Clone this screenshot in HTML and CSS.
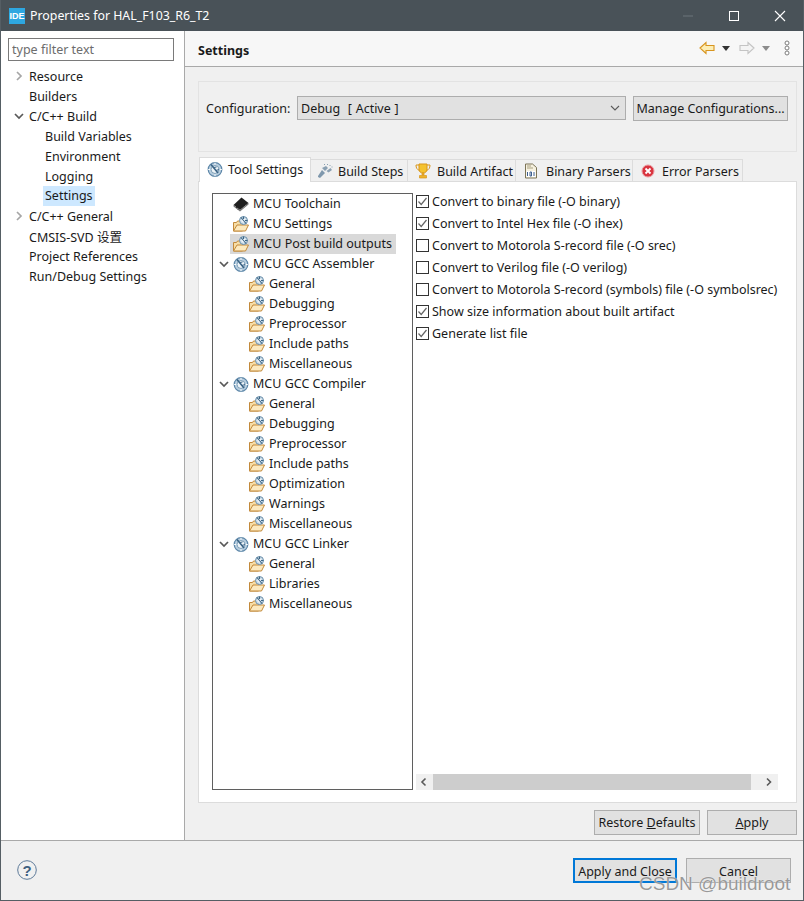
FILE: index.html
```html
<!DOCTYPE html>
<html lang="en">
<head>
<meta charset="utf-8">
<title>Properties for HAL_F103_R6_T2</title>
<link rel="stylesheet" href="styles.css">
</head>
<body>
<svg class="defs" width="0" height="0" aria-hidden="true">
  <defs>
    <symbol id="globe" viewBox="0 0 16 16">
      <circle cx="8" cy="8.500" r="6.800" fill="#b9cfe0" stroke="#5c86a8" stroke-width="1.200"/>
      <circle cx="8" cy="8.500" r="4" fill="#eef4f8" stroke="#7fa0b9"/>
      <path d="M8 1.700v2M14.800 8.500h-2M8 15.300v-2M1.200 8.500h2" stroke="#fff" stroke-width="1"/>
      <path d="M4 3.500 11 12" stroke="#3b6486" stroke-width="1.600"/>
      <path d="M7 6.500 9.500 6M9 9.500l3-1" stroke="#3b6486" stroke-width="1"/>
    </symbol>
    <symbol id="folder" viewBox="0 0 16 16">
      <path d="M.5 15V6.500h3l1-1.500h5v10z" fill="#f7dda5" stroke="#c2893a"/>
      <path d="M.5 15 4 9h11.500L12.500 15z" fill="#fce9be" stroke="#c2893a"/>
      <circle cx="10.500" cy="4.500" r="4" fill="#cfdfea" stroke="#6b90ac"/>
      <circle cx="10.500" cy="4.500" r="2" fill="#f3f7fa"/>
      <path d="M8 1.500l5 6M10.500.5v2.500M14.500 4.500H12" stroke="#3d6686" stroke-width="1.100"/>
    </symbol>
    <symbol id="chev-r" viewBox="0 0 10 10">
      <path d="M3 1 7 5 3 9" fill="none" stroke="#a6a6a6" stroke-width="1.700"/>
    </symbol>
    <symbol id="chev-d" viewBox="0 0 10 10">
      <path d="M1 3 5 7 9 3" fill="none" stroke="#595959" stroke-width="1.700"/>
    </symbol>
    <symbol id="check" viewBox="0 0 13 13">
      <path d="M2.500 6.500 5.200 9.500 10.500 3" fill="none" stroke="#666" stroke-width="1.200"/>
    </symbol>
  </defs>
</svg>
<div class="window">
  <header class="titlebar">
    <span class="app-icon">IDE</span>
    <span class="title-text">Properties for HAL_F103_R6_T2</span>
    <span class="win-ctrls">
      <svg class="win-btn" width="12" height="12" viewBox="0 0 12 12"><path d="M1 6h10" stroke="#6c757a" stroke-width="1"/></svg>
      <svg class="win-btn" width="12" height="12" viewBox="0 0 12 12"><rect x="1.500" y="1.500" width="9" height="9" fill="none" stroke="#fff" stroke-width="1"/></svg>
      <svg class="win-btn" width="12" height="12" viewBox="0 0 12 12"><path d="M1 1l10 10M11 1 1 11" stroke="#fff" stroke-width="1.100"/></svg>
    </span>
  </header>

  <div class="main">
    <aside class="sidebar">
      <input class="filter" type="text" placeholder="type filter text">
      <ul class="nav">
        <li class="nav-row"><svg class="nav-chev"><use href="#chev-r"/></svg><span>Resource</span></li>
        <li class="nav-row"><span class="nav-chev"></span><span>Builders</span></li>
        <li class="nav-row"><svg class="nav-chev"><use href="#chev-d"/></svg><span>C/C++ Build</span></li>
        <li class="nav-row nav-sub"><span>Build Variables</span></li>
        <li class="nav-row nav-sub"><span>Environment</span></li>
        <li class="nav-row nav-sub"><span>Logging</span></li>
        <li class="nav-row nav-sub"><span class="nav-sel">Settings</span></li>
        <li class="nav-row"><svg class="nav-chev"><use href="#chev-r"/></svg><span>C/C++ General</span></li>
        <li class="nav-row"><span class="nav-chev"></span><span>CMSIS-SVD 设置</span></li>
        <li class="nav-row"><span class="nav-chev"></span><span>Project References</span></li>
        <li class="nav-row"><span class="nav-chev"></span><span>Run/Debug Settings</span></li>
      </ul>
    </aside>

    <section class="content">
      <div class="page-head">
        <h1 class="page-title">Settings</h1>
        <div class="page-tools">
          <svg width="16" height="14" viewBox="0 0 16 14"><path d="M1 7 7 1.500v3h8v5H7v3z" fill="#fdeeb5" stroke="#d8951f" stroke-width="1.100"/></svg>
          <span class="drop drop-dark"></span>
          <svg class="tool-gap" width="16" height="14" viewBox="0 0 16 14"><path d="M15 7 9 1.500v3H1v5h8v3z" fill="#f4f4f4" stroke="#c4c4c4" stroke-width="1.100"/></svg>
          <span class="drop drop-light"></span>
          <svg class="tool-menu" width="6" height="16" viewBox="0 0 6 16"><g fill="#fff" stroke="#7d7d7d"><circle cx="3" cy="3" r="2"/><circle cx="3" cy="8" r="2"/><circle cx="3" cy="13" r="2"/></g></svg>
        </div>
      </div>

      <div class="page-body">
        <div class="config">
          <label class="config-label">Configuration:</label>
          <div class="combo"><span>Debug &nbsp;[ Active ]</span>
            <svg width="10" height="10" viewBox="0 0 10 10"><path d="M1 3 5 7 9 3" fill="none" stroke="#5a5a5a" stroke-width="1.100"/></svg>
          </div>
          <button class="btn btn-manage">Manage Configurations...</button>
        </div>

        <div class="tabs">
          <div class="tab tab-active tab-tool"><svg class="ico"><use href="#globe"/></svg><span>Tool Settings</span></div>
          <div class="tab tab-steps"><svg class="ico" viewBox="0 0 16 16"><path d="M1 13 5 7l3 3-5 5-2-1z" fill="#7f98ad"/><path d="M5 5l3 3 3-3-2-2zM9.500 8l2 1.500L15 7l-1.500-2z" fill="#8aa0b2"/><path d="M7 1.500h1M10 1.500h1M12.500 2.500h1M14.500 4h1" stroke="#8aa0b2"/></svg><span>Build Steps</span></div>
          <div class="tab tab-art"><svg class="ico" viewBox="0 0 16 16"><path d="M4 1h8v5c0 3-2 4-4 4S4 9 4 6z" fill="#f4c22e" stroke="#d9961a"/><path d="M4 2H1c0 3 1 4.500 3.500 5.500M12 2h3c0 3-1 4.500-3.500 5.500" fill="none" stroke="#d9961a"/><path d="M7 10h2v2H7zM4.500 12.500h7V15h-7z" fill="#eeb32a" stroke="#d9961a" stroke-width=".7"/></svg><span>Build Artifact</span></div>
          <div class="tab tab-bin"><svg class="ico" viewBox="0 0 16 16"><path d="M2.500 1h7l4 3.500v10.500h-11z" fill="#f6f1df" stroke="#7b7356"/><path d="M4 3h4M4 5h6" stroke="#a79f80"/><path d="M3.500 8h9v6h-9z" fill="#fff"/><path d="M4.500 9v4M7 9h1.500v4H7zM11 9v4" stroke="#3d5f8f" fill="none"/></svg><span>Binary Parsers</span></div>
          <div class="tab tab-err"><svg class="ico" viewBox="0 0 16 16"><circle cx="8" cy="8" r="6" fill="#d9343f" stroke="#eb9aa0"/><path d="M5.500 5.500l5 5M10.500 5.500l-5 5" stroke="#fff" stroke-width="1.800"/></svg><span>Error Parsers</span></div>
        </div>

        <div class="tab-panel">
          <div class="split">
            <ul class="tree">
              <li class="t-row t-l1"><svg class="ico" viewBox="0 0 16 16"><path d="M.5 9 8.500 1.500 15.500 7 7 14z" fill="#1f1f1f"/><path d="M.5 9v1.500L7 15.500 15.500 8.500V7L7 14z" fill="#777"/><path d="M3 12l1-1M5 13.500l1-1M10 11l1-1M12.500 9l1-1" stroke="#333"/></svg><span>MCU Toolchain</span></li>
              <li class="t-row t-l1"><svg class="ico"><use href="#folder"/></svg><span>MCU Settings</span></li>
              <li class="t-row t-l1 t-sel"><svg class="ico"><use href="#folder"/></svg><span>MCU Post build outputs</span></li>
              <li class="t-row t-l0"><svg class="t-chev"><use href="#chev-d"/></svg><svg class="ico"><use href="#globe"/></svg><span>MCU GCC Assembler</span></li>
              <li class="t-row t-l2"><svg class="ico"><use href="#folder"/></svg><span>General</span></li>
              <li class="t-row t-l2"><svg class="ico"><use href="#folder"/></svg><span>Debugging</span></li>
              <li class="t-row t-l2"><svg class="ico"><use href="#folder"/></svg><span>Preprocessor</span></li>
              <li class="t-row t-l2"><svg class="ico"><use href="#folder"/></svg><span>Include paths</span></li>
              <li class="t-row t-l2"><svg class="ico"><use href="#folder"/></svg><span>Miscellaneous</span></li>
              <li class="t-row t-l0"><svg class="t-chev"><use href="#chev-d"/></svg><svg class="ico"><use href="#globe"/></svg><span>MCU GCC Compiler</span></li>
              <li class="t-row t-l2"><svg class="ico"><use href="#folder"/></svg><span>General</span></li>
              <li class="t-row t-l2"><svg class="ico"><use href="#folder"/></svg><span>Debugging</span></li>
              <li class="t-row t-l2"><svg class="ico"><use href="#folder"/></svg><span>Preprocessor</span></li>
              <li class="t-row t-l2"><svg class="ico"><use href="#folder"/></svg><span>Include paths</span></li>
              <li class="t-row t-l2"><svg class="ico"><use href="#folder"/></svg><span>Optimization</span></li>
              <li class="t-row t-l2"><svg class="ico"><use href="#folder"/></svg><span>Warnings</span></li>
              <li class="t-row t-l2"><svg class="ico"><use href="#folder"/></svg><span>Miscellaneous</span></li>
              <li class="t-row t-l0"><svg class="t-chev"><use href="#chev-d"/></svg><svg class="ico"><use href="#globe"/></svg><span>MCU GCC Linker</span></li>
              <li class="t-row t-l2"><svg class="ico"><use href="#folder"/></svg><span>General</span></li>
              <li class="t-row t-l2"><svg class="ico"><use href="#folder"/></svg><span>Libraries</span></li>
              <li class="t-row t-l2"><svg class="ico"><use href="#folder"/></svg><span>Miscellaneous</span></li>
            </ul>
            <div class="opts">
              <div class="opts-list">
                <div class="opt"><span class="box"><svg width="13" height="13"><use href="#check"/></svg></span><span>Convert to binary file (-O binary)</span></div>
                <div class="opt"><span class="box"><svg width="13" height="13"><use href="#check"/></svg></span><span>Convert to Intel Hex file (-O ihex)</span></div>
                <div class="opt"><span class="box"></span><span>Convert to Motorola S-record file (-O srec)</span></div>
                <div class="opt"><span class="box"></span><span>Convert to Verilog file (-O verilog)</span></div>
                <div class="opt"><span class="box"></span><span>Convert to Motorola S-record (symbols) file (-O symbolsrec)</span></div>
                <div class="opt"><span class="box"><svg width="13" height="13"><use href="#check"/></svg></span><span>Show size information about built artifact</span></div>
                <div class="opt"><span class="box"><svg width="13" height="13"><use href="#check"/></svg></span><span>Generate list file</span></div>
              </div>
              <div class="hscroll">
                <svg class="sb-arrow" width="17" height="16" viewBox="0 0 17 16"><path d="M9.500 4.500 6 8l3.500 3.500" fill="none" stroke="#5a5a5a" stroke-width="1.600"/></svg>
                <span class="sb-thumb"></span>
                <svg class="sb-arrow" width="27" height="16" viewBox="0 0 27 16"><path d="M16 4.500 19.500 8 16 11.500" fill="none" stroke="#5a5a5a" stroke-width="1.600"/></svg>
              </div>
            </div>
          </div>
        </div>

        <div class="page-actions">
          <button class="btn btn-restore">Restore <u>D</u>efaults</button>
          <button class="btn btn-apply"><u>A</u>pply</button>
        </div>
      </div>
    </section>
  </div>

  <footer class="footer">
    <svg class="help" width="20" height="20" viewBox="0 0 20 20"><circle cx="10" cy="10" r="9.300" fill="none" stroke="#5d7a99" stroke-width="1"/><text x="10" y="15.500" text-anchor="middle" class="help-q">?</text></svg>
    <div class="footer-btns">
      <button class="btn btn-primary">Apply and Close</button>
      <button class="btn btn-cancel">Cancel</button>
    </div>
  </footer>

  <div class="watermark">CSDN @buildroot</div>
</div>
</body>
</html>
```

FILE: styles.css
```css
* { box-sizing: border-box; }
html, body { margin: 0; padding: 0; }
body {
  width: 804px;
  height: 901px;
  overflow: hidden;
  font-family: "Noto Sans", "Noto Sans CJK SC", sans-serif;
  font-size: 12.5px;
  color: #1a1a1a;
  background: #f0f0f0;
}
.defs { position: absolute; }
ul { list-style: none; margin: 0; padding: 0; }

.window {
  position: relative;
  width: 804px;
  height: 901px;
  display: flex;
  flex-direction: column;
  border: 1px solid #555e64;
  border-top: 0;
}

.titlebar {
  height: 31px;
  flex: none;
  background: #495258;
  color: #fff;
  display: flex;
  align-items: center;
  padding-left: 8px;
  font-size: 12.35px;
}
.app-icon {
  width: 16px;
  height: 16px;
  background: #2ea7e0;
  color: #fff;
  font: bold 9px/16px "Liberation Sans", sans-serif;
  text-align: center;
  margin-right: 5px;
}
.win-ctrls { margin-left: auto; display: flex; align-items: center; gap: 34px; padding-right: 17px; }
.win-btn { display: block; }

.main { flex: 1; display: flex; min-height: 0; }

.sidebar {
  width: 184px;
  flex: none;
  background: #fff;
  border-right: 1px solid #a9a9a9;
  padding: 7px 9px 0 7px;
}
.filter {
  display: block;
  width: 166px;
  height: 23px;
  border: 1px solid #7a7a7a;
  padding: 0 3px;
  font: inherit;
  outline: 0;
}
.filter::placeholder { color: #6d6d6d; opacity: 1; }
.nav { margin-top: 5px; }
.nav-row { height: 20px; display: flex; align-items: center; white-space: nowrap; }
.nav-chev { width: 10px; height: 10px; margin: 0 7px 0 6px; flex: none; }
.nav-chev + span { margin-left: -2px; }
.nav-sub { padding-left: 37px; }
.nav-sel { background: #cde8ff; padding: 0 2px; margin-left: -2px; height: 20px; line-height: 20px; display: block; width: 52px; }

.content { flex: 1; min-width: 0; display: flex; flex-direction: column; }
.page-head {
  height: 36px;
  flex: none;
  background: #f7f7f7;
  border-bottom: 1px solid #a9a9a9;
  display: flex;
  align-items: center;
  padding: 0 13px 0 13px;
}
.page-title { margin: 4px 0 0; font-size: 12.5px; font-weight: 700; }
.page-tools { margin-left: auto; display: flex; align-items: center; margin-bottom: 1px; }
.drop { width: 0; height: 0; border: 4px solid transparent; border-bottom: 0; border-top-width: 5px; margin-left: 7px; }
.drop-dark { border-top-color: #333; }
.drop-light { border-top-color: #8c8c8c; }
.tool-gap { margin-left: 9px; }
.tool-menu { margin-left: 14px; }

.page-body { flex: 1; display: flex; flex-direction: column; padding: 14px 6px 0 13px; }

.config {
  height: 71px;
  flex: none;
  border: 1px solid #e3e3e3;
  display: flex;
  align-items: flex-start;
  padding: 14px 8px 0 7px;
}
.config-label { width: 91px; line-height: 26px; }
.combo {
  width: 329px;
  height: 24px;
  background: #e1e1e1;
  border: 1px solid #adadad;
  display: flex;
  align-items: center;
  justify-content: space-between;
  padding: 0 5px 0 3px;
  word-spacing: .5px;
}
.btn {
  font: inherit;
  color: #1a1a1a;
  background: #e1e1e1;
  border: 1px solid #adadad;
  height: 25px;
  padding: 0;
  border-radius: 0;
  white-space: nowrap;
}
.btn-manage { width: 155px; margin-left: 7px; }

.tabs { display: flex; height: 29px; flex: none; align-items: flex-end; padding-left: 1px; position: relative; z-index: 1; }
.tab {
  height: 22px;
  display: flex;
  align-items: center;
  padding-left: 6px;
  padding-top: 1px;
  background: #f0f0f0;
  border: 1px solid #dcdcdc;
  border-left: 0;
  border-bottom: 0;
  white-space: nowrap;
}
.tab .ico { margin-right: 5px; }
.tab-active { height: 25px; background: #fff; border-left: 1px solid #dcdcdc; margin-bottom: -1px; padding-top: 0; padding-bottom: 2px; }
.tab-tool { width: 112px; padding-left: 7px; }
.tab-steps { width: 97px; }
.tab-art { width: 108px; padding-left: 7px; }
.tab-art .ico { margin-right: 6px; }
.tab-bin { width: 117px; padding-left: 7px; }
.tab-bin .ico { margin-right: 7px; }
.tab-err { width: 110px; padding-left: 7px; }
.tab-err .ico { margin-right: 6px; }
.ico { width: 16px; height: 16px; flex: none; display: block; }

.tab-panel {
  height: 622px;
  flex: none;
  background: #fff;
  border: 1px solid #dcdcdc;
  padding: 11px 18px 12px 13px;
}
.split { height: 100%; display: flex; }
.tree {
  width: 201px;
  flex: none;
  height: 100%;
  border: 1px solid #5f5f5f;
  margin-right: 3px;
  white-space: nowrap;
  padding-top: 0;
}
.t-row { height: 20px; display: flex; align-items: center; padding-bottom: 1px; }
.t-row span { margin-bottom: 1px; }
.t-row .ico { margin-right: 4px; }
.t-l1 { margin-left: 17px; padding-left: 3px; width: 166px; }
.t-l2 { padding-left: 36px; }
.t-l0 { padding-left: 6px; }
.t-chev { width: 10px; height: 10px; margin-right: 4px; flex: none; }
.t-sel { background: #d9d9d9; }

.opts { flex: 1; min-width: 0; display: flex; flex-direction: column; overflow: hidden; }
.opts-list { flex: 1; overflow: hidden; margin-top: -3px; }
.opt { height: 22px; display: flex; align-items: center; white-space: nowrap; }
.box {
  width: 13px;
  height: 13px;
  flex: none;
  margin-right: 3px;
  background: #fff;
  border: 1px solid #333;
  display: block;
  position: relative;
}
.box svg { display: block; margin: -1px; }
.hscroll { height: 16px; flex: none; background: #f0f0f0; display: flex; align-items: center; }
.sb-thumb { width: 318px; height: 16px; background: #cdcdcd; }
.sb-arrow { flex: none; display: block; }

.page-actions { display: flex; justify-content: flex-end; gap: 7px; padding-top: 7px; }
.btn-restore { width: 106px; }
.btn-apply { width: 90px; }

.footer {
  height: 60px;
  flex: none;
  border-top: 1px solid #a9a9a9;
  background: #f0f0f0;
  display: flex;
  align-items: center;
  padding: 0 12px 0 16px;
}
.help { display: block; margin-bottom: 2px; }
.help-q { font: bold 15px "Liberation Sans", sans-serif; fill: #3f5f80; }
.footer-btns { margin-left: auto; display: flex; gap: 9px; }
.btn-primary { width: 104px; border: 2px solid #0078d7; padding-top: 1px; }
.btn-cancel { width: 105px; padding-top: 1px; }

.watermark {
  position: absolute;
  left: 638px;
  top: 872px;
  font: 19px/24px "Liberation Sans", sans-serif;
  color: rgba(120, 120, 120, .75);
  text-shadow: 0 0 1px #fff;
  white-space: nowrap;
}
```
